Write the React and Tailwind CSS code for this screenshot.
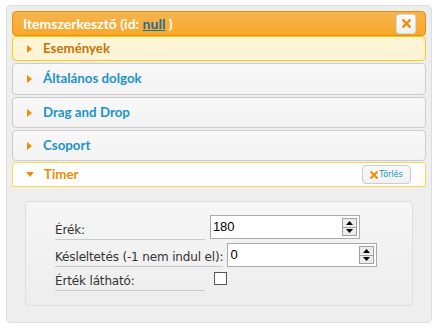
import React from 'react';

const Arrow = ({ open }) =>
  open ? (
    <svg width="8" height="5" viewBox="0 0 8 5" className="shrink-0">
      <path d="M0 0h8L4 5z" fill="#ef8c08" />
    </svg>
  ) : (
    <svg width="5" height="8" viewBox="0 0 5 8" className="shrink-0">
      <path d="M0 0l5 4-5 4z" fill="#ef8c08" />
    </svg>
  );

const Cross = ({ size = 9 }) => (
  <svg width={size} height={size} viewBox="0 0 10 10">
    <path d="M1.5 1.5l7 7M8.5 1.5l-7 7" stroke="#ef8c08" strokeWidth="2.6" strokeLinecap="square" />
  </svg>
);

const Section = ({ title, h }) => (
  <div
    className={`mt-[2px] flex items-center gap-[11px] rounded-[4px] border border-[#cccccc] bg-gradient-to-b from-[#f8f8f8] to-[#f3f3f3] pl-[14px] text-[#1c94c4] ${h}`}
  >
    <Arrow />
    <span>{title}</span>
  </div>
);

const Spinner = () => (
  <div className="mr-[2px] flex h-[18px] w-[15px] flex-col border border-[#a0a0a0] bg-[#ececec]">
    <div className="flex flex-1 items-center justify-center border-b border-[#a0a0a0]">
      <svg width="7" height="4" viewBox="0 0 7 4"><path d="M0 4L3.5 0 7 4z" fill="#000" /></svg>
    </div>
    <div className="flex flex-1 items-center justify-center">
      <svg width="7" height="4" viewBox="0 0 7 4"><path d="M0 0h7L3.5 4z" fill="#000" /></svg>
    </div>
  </div>
);

const NumberField = ({ value, w }) => (
  <div className={`flex h-[24px] items-center justify-between border border-[#a9a9a9] bg-white pl-[2px] ${w}`}>
    <span className="font-['Liberation_Sans',Arial,sans-serif] text-[13px] text-black">{value}</span>
    <Spinner />
  </div>
);

export default function App() {
  return (
    <div className="min-h-[331px] bg-white pl-[6px] pt-[5px] font-['DejaVu_Sans',Verdana,sans-serif]">
      <div className="flex h-[318px] w-[426px] flex-col rounded-[5px] border border-[#dddddd] bg-[#eeeeee] px-[5px] pt-[5px]">
        <div className="font-['Lato',sans-serif] text-[13.3px] font-bold">
          <div className="flex h-[25px] items-center justify-between rounded-[4px] border border-[#e78f08] bg-gradient-to-b from-[#f6b44f] to-[#f6a828] pl-[10px] pr-[9px]">
            <span className="text-[14px] text-white">
              Itemszerkesztő (id: <span className="text-[#1c6e9e] underline">null</span> )
            </span>
            <div className="flex h-[20px] w-[20px] items-center justify-center rounded-[3px] border border-[#d8d8d8] bg-gradient-to-b from-white to-[#f0f0f0]">
              <Cross />
            </div>
          </div>

          <div className="flex h-[25px] items-center gap-[11px] rounded-[4px] border border-[#fbcb09] bg-gradient-to-b from-[#fdf6d6] to-[#fcf3d6] pl-[14px] text-[#c77405]">
            <Arrow />
            <span>Események</span>
          </div>

          <Section title="Általános dolgok" h="h-[32px]" />
          <Section title="Drag and Drop" h="h-[31px]" />
          <Section title="Csoport" h="h-[31px]" />

          <div className="mt-[1px] flex h-[25px] items-center justify-between rounded-t-[4px] border border-[#fbd850] bg-white pl-[13px] pr-[14px]">
            <div className="flex items-center gap-[10px] text-[#eb8f00]">
              <Arrow open />
              <span>Timer</span>
            </div>
            <div className="flex h-[19px] w-[49px] items-center justify-center gap-[1px] rounded-[4px] border border-[#cccccc] bg-gradient-to-b from-[#f9f9f9] to-[#f1f1f1] font-['DejaVu_Sans',sans-serif] text-[8px] font-normal text-[#1c94c4]">
              <Cross size={8} />
              <span>Törlés</span>
            </div>
          </div>
        </div>

        <div className="px-[13px] pt-[14px]">
          <div className="flex h-[105px] w-[388px] flex-col gap-[4px] rounded-[4px] border border-[#dedede] bg-gradient-to-b from-[#f6f6f6] to-[#ededed] pl-[29px] pt-[13px] text-[12px] tracking-[-0.15px] text-[#333333]">
            <div className="flex h-[24px] items-center gap-[5px]">
              <span className="w-[150px] border-b border-[#c8cbce] pt-[6px]">Érék:</span>
              <NumberField value="180" w="w-[150px]" />
            </div>
            <div className="flex h-[24px] items-center gap-[4px]">
              <span className="border-b border-[#c8cbce] pt-[4px]">Késleltetés (-1 nem indul el):</span>
              <NumberField value="0" w="w-[150px]" />
            </div>
            <div className="flex h-[18px] items-center gap-[9px]">
              <span className="w-[150px] border-b border-[#c8cbce] pt-[2px]">Érték látható:</span>
              <div className="-mt-[3px] h-[13px] w-[13px] border border-[#555555] bg-white" />
            </div>
          </div>
        </div>
      </div>
    </div>
  );
}
